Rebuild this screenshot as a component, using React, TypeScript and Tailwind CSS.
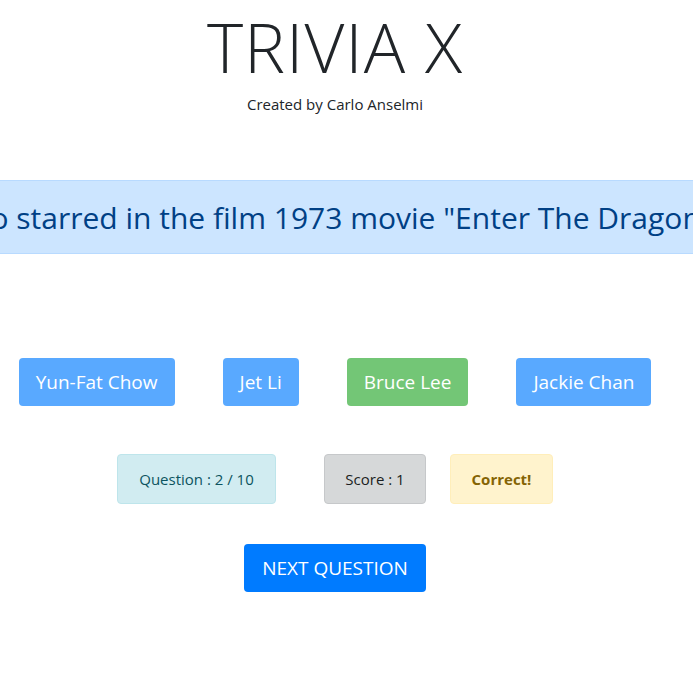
import React from "react";

const answers = [
  { label: "Yun-Fat Chow", correct: false },
  { label: "Jet Li", correct: false },
  { label: "Bruce Lee", correct: true },
  { label: "Jackie Chan", correct: false },
];

const App = () => {
  return (
    <div className="w-[693px] overflow-hidden bg-white" style={{ fontFamily: '"Open Sans", "Noto Sans", sans-serif' }}>
      {/* Header */}
      <div className="w-[670px] flex flex-col items-center">
        <h1 className="mt-[4px] text-[69px] font-light leading-[84px] text-[#212529] tracking-[1px]">TRIVIA X</h1>
        <p className="mt-[6px] text-[15px] leading-[20px] text-[#212529]">Created by Carlo Anselmi</p>
      </div>

      {/* Question */}
      <div className="mt-[66px] w-[693px] h-[74px] bg-[#cce5ff] border-y border-[#b8daff] flex items-center">
        <div className="w-[670px] flex justify-center">
          <p className="whitespace-nowrap shrink-0 text-[30px] text-[#004085]">
            Who starred in the film 1973 movie "Enter The Dragon"?
          </p>
        </div>
      </div>

      <div className="w-[670px] flex flex-col items-center">
        {/* Answers */}
        <div className="mt-[104px] flex justify-center">
          {answers.map((a) => (
            <button
              key={a.label}
              className={`mx-[24px] h-[48px] px-[17px] rounded-[4px] text-[19px] text-white whitespace-nowrap ${
                a.correct ? "bg-[#73c676]" : "bg-[#59a9ff]"
              }`}
            >
              {a.label}
            </button>
          ))}
        </div>

        {/* Status */}
        <div className="mt-[48px] flex items-center">
          <div className="h-[50px] w-[159px] flex items-center justify-center rounded-[4px] border border-[#bee5eb] bg-[#d1ecf1] text-[15px] text-[#0c5460]">
            Question : 2 / 10
          </div>
          <div className="ml-[48px] h-[50px] w-[102px] flex items-center justify-center rounded-[4px] border border-[#c6c8ca] bg-[#d6d8d9] text-[15px] text-[#1b1e21]">
            Score : 1
          </div>
          <div className="ml-[24px] h-[50px] w-[103px] flex items-center justify-center rounded-[4px] border border-[#ffeeba] bg-[#fff3cd] text-[15px] font-bold text-[#856404]">
            Correct!
          </div>
        </div>

        {/* Next */}
        <button className="mt-[40px] h-[48px] w-[182px] rounded-[4px] bg-[#007bff] text-[19px] text-white">
          NEXT QUESTION
        </button>
      </div>
    </div>
  );
};

export default App;
